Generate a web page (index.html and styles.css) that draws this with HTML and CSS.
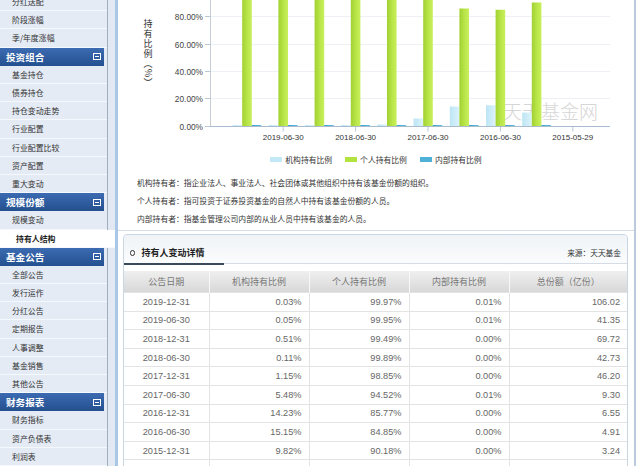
FILE: index.html
```html
<!DOCTYPE html>
<html lang="zh-CN">
<head>
<meta charset="utf-8">
<title>持有人结构</title>
<link rel="stylesheet" href="styles.css">
</head>
<body>
<div class="layout">
  <div class="side-wrap">
    <nav class="sidebar">
      <a class="item">分红送配</a>
      <a class="item">阶段涨幅</a>
      <a class="item">季/年度涨幅</a>
      <div class="group"><span>投资组合</span><span class="fold"></span></div>
      <a class="item">基金持仓</a>
      <a class="item">债券持仓</a>
      <a class="item">持仓变动走势</a>
      <a class="item">行业配置</a>
      <a class="item">行业配置比较</a>
      <a class="item">资产配置</a>
      <a class="item">重大变动</a>
      <div class="group"><span>规模份额</span><span class="fold"></span></div>
      <a class="item">规模变动</a>
      <a class="item active">持有人结构</a>
      <div class="group"><span>基金公告</span><span class="fold"></span></div>
      <a class="item">全部公告</a>
      <a class="item">发行运作</a>
      <a class="item">分红公告</a>
      <a class="item">定期报告</a>
      <a class="item">人事调整</a>
      <a class="item">基金销售</a>
      <a class="item">其他公告</a>
      <div class="group"><span>财务报表</span><span class="fold"></span></div>
      <a class="item">财务指标</a>
      <a class="item">资产负债表</a>
      <a class="item">利润表</a>
    </nav>
  </div>
  <main class="panel">
    <section class="chart-box">
      <svg class="chart" viewBox="118 0 516 148" width="516" height="148">
        <defs>
          <linearGradient id="gGreen" x1="0" x2="1" y1="0" y2="0">
            <stop offset="0" stop-color="#a2d133"/>
            <stop offset="0.6" stop-color="#bbe74b"/>
            <stop offset="1" stop-color="#c8ef5c"/>
          </linearGradient>
          <linearGradient id="gLight" x1="0" x2="1" y1="0" y2="0">
            <stop offset="0" stop-color="#bde5f4"/>
            <stop offset="1" stop-color="#dcf3fb"/>
          </linearGradient>
          <linearGradient id="gDark" x1="0" x2="1" y1="0" y2="0">
            <stop offset="0" stop-color="#3b9fcb"/>
            <stop offset="1" stop-color="#66c0e2"/>
          </linearGradient>
        </defs>
        <text class="ytitle" x="148" y="19">持有比例（%）</text>
        <g class="gridlines">
          <line x1="210" x2="610" y1="16.5" y2="16.5"/>
          <line x1="210" x2="610" y1="44.5" y2="44.5"/>
          <line x1="210" x2="610" y1="71.5" y2="71.5"/>
          <line x1="210" x2="610" y1="98.5" y2="98.5"/>
        </g>
        <g class="ticks">
          <line x1="205" x2="210" y1="16.5" y2="16.5"/>
          <line x1="205" x2="210" y1="44.5" y2="44.5"/>
          <line x1="205" x2="210" y1="71.5" y2="71.5"/>
          <line x1="205" x2="210" y1="98.5" y2="98.5"/>
          <line x1="205" x2="210" y1="126.5" y2="126.5"/>
          <line x1="283.2" x2="283.2" y1="126.5" y2="131.5"/>
          <line x1="355.6" x2="355.6" y1="126.5" y2="131.5"/>
          <line x1="428" x2="428" y1="126.5" y2="131.5"/>
          <line x1="500.4" x2="500.4" y1="126.5" y2="131.5"/>
          <line x1="572.8" x2="572.8" y1="126.5" y2="131.5"/>
        </g>
        <line class="yaxis" x1="210.5" x2="210.5" y1="-12" y2="126.5"/>
        <g class="ylab">
          <text x="203" y="17">80.00%</text>
          <text x="203" y="44.5">60.00%</text>
          <text x="203" y="72">40.00%</text>
          <text x="203" y="99">20.00%</text>
          <text x="203" y="126.5">0.00%</text>
        </g>
        <text class="watermark" x="503" y="110">天天基金网</text>
        <g class="bars-light" fill="url(#gLight)">
          <rect x="232.6" y="125" width="9.6" height="1"/>
          <rect x="268.8" y="125" width="9.6" height="1"/>
          <rect x="305.0" y="125" width="9.6" height="1"/>
          <rect x="341.2" y="125" width="9.6" height="1"/>
          <rect x="377.4" y="124.42" width="9.6" height="1.58"/>
          <rect x="413.6" y="118.49" width="9.6" height="7.51"/>
          <rect x="449.8" y="106.5" width="9.6" height="19.5"/>
          <rect x="486.0" y="105.24" width="9.6" height="20.76"/>
          <rect x="522.2" y="112.55" width="9.6" height="13.45"/>
        </g>
        <g class="bars-green" fill="url(#gGreen)">
          <rect x="242.2" y="-10.96" width="9.6" height="136.96"/>
          <rect x="278.4" y="-10.93" width="9.6" height="136.93"/>
          <rect x="314.6" y="-10.3" width="9.6" height="136.3"/>
          <rect x="350.8" y="-10.85" width="9.6" height="136.85"/>
          <rect x="387.0" y="-9.42" width="9.6" height="135.42"/>
          <rect x="423.2" y="-3.49" width="9.6" height="129.49"/>
          <rect x="459.4" y="8.5" width="9.6" height="117.5"/>
          <rect x="495.6" y="9.76" width="9.6" height="116.24"/>
          <rect x="531.8" y="2.45" width="9.6" height="123.55"/>
        </g>
        <g class="bars-dark" fill="url(#gDark)">
          <rect x="251.8" y="125" width="9.6" height="1"/>
          <rect x="288.0" y="125" width="9.6" height="1"/>
          <rect x="324.2" y="125" width="9.6" height="1"/>
          <rect x="360.4" y="125" width="9.6" height="1"/>
          <rect x="396.6" y="125" width="9.6" height="1"/>
          <rect x="432.8" y="125" width="9.6" height="1"/>
          <rect x="469.0" y="125" width="9.6" height="1"/>
          <rect x="505.2" y="125" width="9.6" height="1"/>
          <rect x="541.4" y="125" width="9.6" height="1"/>
        </g>
        <line class="xaxis" x1="210" x2="610" y1="126.5" y2="126.5"/>
        <g class="xlab">
          <text x="283.2" y="137">2019-06-30</text>
          <text x="355.6" y="137">2018-06-30</text>
          <text x="428" y="137">2017-06-30</text>
          <text x="500.4" y="137">2016-06-30</text>
          <text x="572.8" y="137">2015-05-29</text>
        </g>
      </svg>
      <div class="legend">
        <span class="legend-item"><i class="swatch swatch-light"></i>机构持有比例</span>
        <span class="legend-item"><i class="swatch swatch-green"></i>个人持有比例</span>
        <span class="legend-item"><i class="swatch swatch-dark"></i>内部持有比例</span>
      </div>
      <div class="notes">
        <p>机构持有者：指企业法人、事业法人、社会团体或其他组织中持有该基金份额的组织。</p>
        <p>个人持有者：指可投资于证券投资基金的自然人中持有该基金份额的人员。</p>
        <p>内部持有者：指基金管理公司内部的从业人员中持有该基金的人员。</p>
      </div>
    </section>
    <section class="detail">
      <div class="detail-head">
        <h3 class="detail-title"><span class="ring"></span>持有人变动详情</h3>
        <span class="source">来源：天天基金</span>
      </div>
      <table class="grid">
        <colgroup>
          <col class="c-date"><col class="c-num"><col class="c-num"><col class="c-num"><col>
        </colgroup>
        <thead>
          <tr><th>公告日期</th><th>机构持有比例</th><th>个人持有比例</th><th>内部持有比例</th><th>总份额（亿份）</th></tr>
        </thead>
        <tbody>
          <tr><td>2019-12-31</td><td>0.03%</td><td>99.97%</td><td>0.01%</td><td>106.02</td></tr>
          <tr><td>2019-06-30</td><td>0.05%</td><td>99.95%</td><td>0.01%</td><td>41.35</td></tr>
          <tr><td>2018-12-31</td><td>0.51%</td><td>99.49%</td><td>0.00%</td><td>69.72</td></tr>
          <tr><td>2018-06-30</td><td>0.11%</td><td>99.89%</td><td>0.00%</td><td>42.73</td></tr>
          <tr><td>2017-12-31</td><td>1.15%</td><td>98.85%</td><td>0.00%</td><td>46.20</td></tr>
          <tr><td>2017-06-30</td><td>5.48%</td><td>94.52%</td><td>0.01%</td><td>9.30</td></tr>
          <tr><td>2016-12-31</td><td>14.23%</td><td>85.77%</td><td>0.00%</td><td>6.55</td></tr>
          <tr><td>2016-06-30</td><td>15.15%</td><td>84.85%</td><td>0.00%</td><td>4.91</td></tr>
          <tr><td>2015-12-31</td><td>9.82%</td><td>90.18%</td><td>0.00%</td><td>3.24</td></tr>
          <tr class="empty-row"><td></td><td></td><td></td><td></td><td></td></tr>
        </tbody>
      </table>
    </section>
  </main>
</div>
</body>
</html>
```

FILE: styles.css
```css
html, body {
  margin: 0;
  padding: 0;
  overflow: hidden;
  background: #fff;
}
body {
  width: 640px;
  height: 466px;
  font-family: "Liberation Sans", "Noto Sans CJK SC", sans-serif;
  color: #333;
}
.layout {
  display: flex;
  height: 466px;
}
.side-wrap {
  background: #e3e9f2;
  padding-right: 7px;
}
.sidebar {
  width: 107px;
  margin-top: -6.9px;
  min-height: 490px;
  border-right: 1px solid #9eadc0;
  background: #e4ebf5;
  display: flex;
  flex-direction: column;
}
.item {
  display: block;
  height: 18.2px;
  box-sizing: border-box;
  border-bottom: 1px solid #f5f8fc;
  padding-left: 12px;
  font-family: "Noto Sans CJK SC", sans-serif;
  font-size: 7.9px;
  line-height: 17.2px;
  color: #333;
  white-space: nowrap;
}
.item.active {
  background: #fff;
  font-weight: bold;
  padding-left: 16px;
  margin-right: -8px;
  color: #222;
}
.group {
  height: 18.2px;
  box-sizing: border-box;
  margin-right: 3px;
  padding: 0 3px 0 6px;
  display: flex;
  align-items: center;
  justify-content: space-between;
  background: linear-gradient(#3c6bb2, #24508f);
  color: #fff;
  font-family: "Noto Sans CJK SC", sans-serif;
  font-weight: bold;
  font-size: 9.6px;
}
.fold {
  width: 6px;
  height: 5px;
  border: 1px solid #fff;
  background: linear-gradient(#fff, #fff) center / 4px 1px no-repeat;
}
.panel {
  width: 516px;
  border-left: 3px solid #abc7e8;
  border-right: 2px solid #bccbdc;
  background: #fff;
}
.chart-box {
  border-bottom: 1px solid #d3dde8;
  padding-bottom: 2px;
}
.chart {
  display: block;
  width: 516px;
  height: 148px;
}
.ytitle {
  font-family: "Noto Sans CJK SC", sans-serif;
  font-size: 9px;
  letter-spacing: 1px;
  fill: #333;
  writing-mode: vertical-rl;
}
.gridlines line {
  stroke: #edf0f4;
  stroke-width: 1;
}
.ticks line {
  stroke: #b9c6d4;
  stroke-width: 1;
}
.yaxis {
  stroke: #c4ccd6;
  stroke-width: 1;
}
.xaxis {
  stroke: #a9bbcf;
  stroke-width: 1;
}
.ylab text {
  font-family: "Liberation Sans", sans-serif;
  font-size: 8.3px;
  fill: #444;
  text-anchor: end;
  dominant-baseline: central;
}
.xlab text {
  font-family: "Liberation Sans", sans-serif;
  font-size: 8px;
  fill: #333;
  text-anchor: middle;
  dominant-baseline: central;
}
.watermark {
  font-family: "Noto Sans CJK SC", sans-serif;
  font-weight: 300;
  font-size: 19px;
  fill: #d6d6d6;
  dominant-baseline: central;
}
.legend {
  margin-top: 2px;
  height: 18px;
  display: flex;
  justify-content: center;
  align-items: center;
  gap: 13px;
  font-family: "Noto Sans CJK SC", sans-serif;
  font-size: 7.8px;
  color: #333;
}
.legend-item {
  display: flex;
  align-items: center;
  gap: 3px;
}
.swatch {
  width: 12px;
  height: 5px;
}
.swatch-light { background: #c3e8f6; }
.swatch-green { background: #b3e33f; }
.swatch-dark { background: #4fb0d8; }
.notes {
  margin-top: 6px;
  padding-left: 19px;
  font-family: "Noto Sans CJK SC", sans-serif;
  font-size: 7.8px;
  line-height: 18px;
  color: #333;
}
.notes p {
  margin: 0;
}
.detail {
  margin: 3px 6px 0 5px;
  border: 1px solid #c9d6e4;
  border-radius: 4px 4px 0 0;
}
.detail-head {
  height: 28px;
  border-bottom: 1px solid #d5dce6;
  border-radius: 4px 4px 0 0;
  background: linear-gradient(#eff3f7, #fbfcfd);
  display: flex;
  justify-content: space-between;
  align-items: flex-start;
}
.detail-title {
  margin: 0;
  width: 100px;
  box-sizing: border-box;
  padding: 12px 0 4px 6px;
  height: 30px;
  border-bottom: 2px solid #3b4a5a;
  display: flex;
  align-items: center;
  font-family: "Noto Sans CJK SC", sans-serif;
  font-size: 9px;
  line-height: 12px;
  font-weight: bold;
  color: #222;
}
.ring {
  width: 3.4px;
  height: 3.4px;
  border: 1.3px solid #333;
  border-radius: 50%;
  margin-right: 6px;
}
.source {
  padding: 12px 6px 0 0;
  line-height: 12px;
  font-family: "Noto Sans CJK SC", sans-serif;
  font-size: 7.7px;
  color: #333;
}
.grid {
  margin-top: 7px;
  width: 100%;
  border-collapse: collapse;
  table-layout: fixed;
  font-family: "Liberation Sans", sans-serif;
  font-size: 9.2px;
  color: #666;
}
.c-date { width: 85px; }
.c-num { width: 100px; }
.grid th {
  height: 21px;
  padding: 0;
  background: linear-gradient(#efefef, #d8d8d8);
  border-left: 1px solid #f8f8f8;
  font-family: "Noto Sans CJK SC", sans-serif;
  font-weight: normal;
  font-size: 9px;
  color: #777;
  text-align: center;
}
.grid th:first-child { border-left: 0; }
.grid td {
  height: 17.6px;
  padding: 0 7px;
  border: 1px solid #e3e3e3;
  text-align: right;
  white-space: nowrap;
  line-height: 12px;
}
.grid td:first-child {
  border-left: 0;
  text-align: center;
}
.grid td:last-child {
  border-right: 0;
}
```
